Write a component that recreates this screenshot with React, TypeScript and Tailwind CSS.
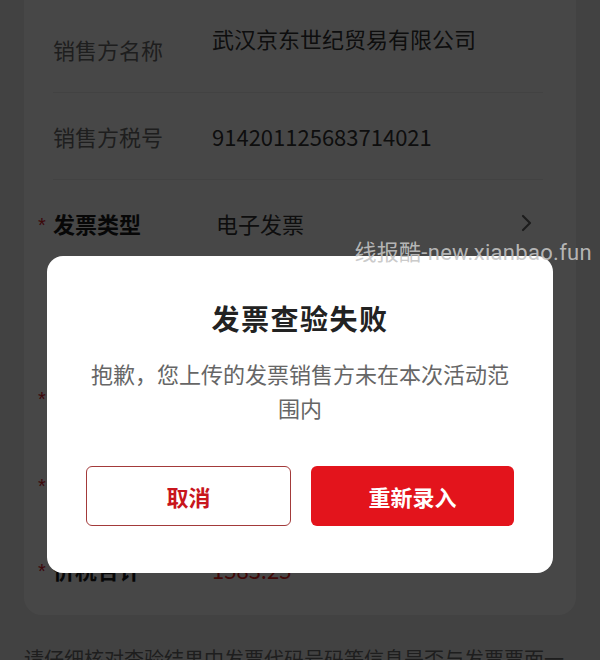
import React from 'react';

const cjk = { fontFamily: '"Noto Sans CJK SC", "Noto Sans", sans-serif' };

type Row = {
  label: string;
  value: string;
  required?: boolean;
  select?: boolean;
  red?: boolean;
  lift?: boolean;
  divider?: boolean;
  last?: boolean;
};

const rows: Row[] = [
  { label: '销售方名称', value: '武汉京东世纪贸易有限公司', lift: true, divider: true },
  { label: '销售方税号', value: '914201125683714021', divider: true },
  { label: '发票类型', value: '电子发票', required: true, select: true, divider: true },
  { label: '发票代码', value: '', divider: true },
  { label: '发票号码', value: '', required: true, divider: true },
  { label: '开票日期', value: '', required: true, divider: true },
  { label: '价税合计', value: '1583.25', required: true, red: true, last: true },
];

function FieldRow({ row }: { row: Row }) {
  return (
    <div
      className={`h-[87px] flex items-center ${row.divider ? 'border-b border-[#eeeeee]' : ''} ${
        row.last ? 'pb-[6px]' : ''
      }`}
    >
      <div className="relative w-[159px] shrink-0">
        {row.required && (
          <span
            className="absolute -left-[15px] top-[8px] text-[20px] leading-[20px] text-[#d8202a]"
            style={{ fontFamily: '"Liberation Sans", sans-serif' }}
          >
            *
          </span>
        )}
        <span
          className={`text-[22px] leading-[32px] ${
            row.required ? 'font-semibold text-[#1c1c1c]' : 'text-[#6e6e6e]'
          }`}
        >
          {row.label}
        </span>
      </div>
      <div
        className={`flex-1 text-[22px] leading-[32px] ${row.red ? 'text-[#e2231a]' : 'text-[#333333]'} ${
          row.lift ? 'pb-[22px]' : ''
        } ${row.select ? 'pl-[4px]' : ''}`}
      >
        {row.value}
      </div>
      {row.select && (
        <svg width="12" height="18" viewBox="0 0 12 18" className="mr-[10px]">
          <path d="M2 2 L9 9 L2 16" fill="none" stroke="#666666" strokeWidth="2.2" strokeLinecap="round" strokeLinejoin="round" />
        </svg>
      )}
    </div>
  );
}

export default function App() {
  return (
    <div className="relative w-[600px] h-[660px] overflow-hidden bg-[#ededed]" style={cjk}>
      {/* Underlying page */}
      <div className="px-[24px]">
        <div className="bg-white rounded-b-[18px] pl-[29px] pr-[33px] pt-[6px]">
          {rows.map((r) => (
            <FieldRow key={r.label} row={r} />
          ))}
        </div>
        <p className="mt-[29px] text-[20px] leading-[30px] text-[#6e6e6e]">
          请仔细核对查验结果中发票代码号码等信息是否与发票票面一致，如有误请重新录入
        </p>
      </div>

      {/* Mask + dialog */}
      <div className="absolute inset-0 bg-black/[0.72] flex justify-center items-start pt-[256px]">
        <div className="w-[506px] bg-white rounded-[16px] px-[39px] pt-[42px] pb-[47px] flex flex-col items-center">
          <h2 className="text-[28px] leading-[40px] font-bold text-[#222222] tracking-[1.5px]">发票查验失败</h2>
          <p className="mt-[18px] text-[22px] leading-[34px] text-[#666666] text-center">
            抱歉，您上传的发票销售方未在本次活动范围内
          </p>
          <div className="mt-[42px] w-full flex gap-[20px]">
            <button className="flex-1 h-[60px] rounded-[6px] border-[1.5px] border-[#a33a3a] text-[#c8161d] text-[22px] font-bold bg-white">
              取消
            </button>
            <button className="flex-1 h-[60px] rounded-[6px] bg-[#e3141c] text-white text-[22px] font-bold">
              重新录入
            </button>
          </div>
        </div>
      </div>

      {/* Watermark */}
      <div
        className="absolute right-[8px] top-[239px] text-[22px] leading-[28px] tracking-[0.3px] text-[#c4c4c4]/90"
        style={{ fontFamily: 'Roboto, "Noto Sans CJK SC", sans-serif' }}
      >
        线报酷-new.xianbao.fun
      </div>
    </div>
  );
}
